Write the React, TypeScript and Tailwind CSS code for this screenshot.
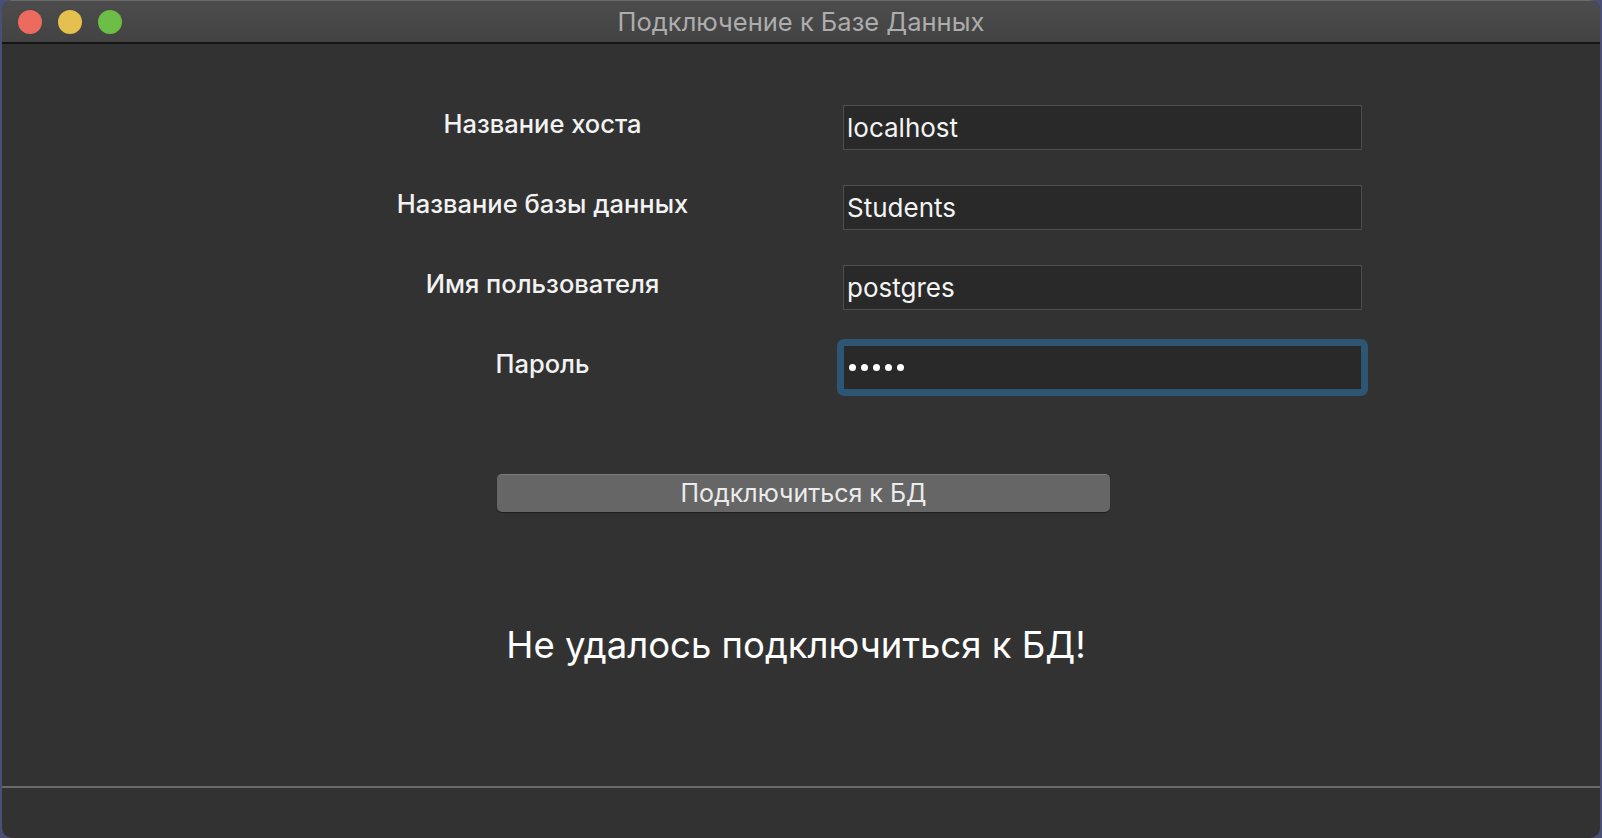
const fields = [
  { label: "Название хоста", value: "localhost" },
  { label: "Название базы данных", value: "Students" },
  { label: "Имя пользователя", value: "postgres" },
];

function TrafficLights() {
  return (
    <div className="flex items-center gap-[16px] pl-[16px]">
      <span className="h-[24px] w-[24px] rounded-full bg-[#ed6a5e]" />
      <span className="h-[24px] w-[24px] rounded-full bg-[#e5c04f]" />
      <span className="h-[24px] w-[24px] rounded-full bg-[#6cbe46]" />
    </div>
  );
}

function FieldRow({ label, children }: { label: string; children: React.ReactNode }) {
  return (
    <div className="flex items-center pl-[268px]">
      <div className="w-[545px] -translate-y-[3px] text-center text-[25.5px] font-medium text-[#f2f2f2]">{label}</div>
      <div className="ml-[28px]">{children}</div>
    </div>
  );
}

export default function App() {
  return (
    <div
      className="h-[838px] w-[1602px] overflow-hidden bg-[#4a4f78] px-[2px]"
      style={{ fontFamily: "Inter, 'Noto Sans', sans-serif" }}
    >
      <div className="flex h-[838px] flex-col overflow-hidden rounded-[10px] bg-[#323232]">
        <div className="relative flex h-[44px] shrink-0 items-center border-t border-[#6a6a6a] border-b-2 border-b-[#151515] bg-gradient-to-b from-[#4c4c4c] to-[#434343]">
          <TrafficLights />
          <div className="absolute inset-x-0 translate-y-[1px] text-center text-[25.5px] text-[#adadad]">Подключение к Базе Данных</div>
        </div>

        <div className="flex flex-1 flex-col pt-[61px]">
          <div className="flex flex-col gap-[35px]">
            {fields.map((f) => (
              <FieldRow key={f.label} label={f.label}>
                <div className="flex h-[45px] w-[519px] items-center border border-[#4e4e4e] bg-[#292929] pl-[3px] text-[26px] text-[#f4f4f4]">
                  {f.value}
                </div>
              </FieldRow>
            ))}
            <FieldRow label="Пароль">
              <div className="relative flex h-[45px] w-[519px] items-center gap-[5px] border border-[#4e4e4e] bg-[#292929] pl-[5px]">
                <div className="absolute -inset-[7px] rounded-[7px] border-[7px] border-[#2c5673]" />
                {[0, 1, 2, 3, 4].map((i) => (
                  <span key={i} className="h-[7px] w-[7px] rounded-full bg-white" />
                ))}
              </div>
            </FieldRow>
          </div>

          <button className="ml-[495px] mt-[84px] flex h-[38px] w-[613px] items-center justify-center rounded-[5px] border-t border-[#7a7a7a] bg-[#666666] text-[25px] text-[#ececec] shadow-[0_1px_1px_rgba(0,0,0,0.4)]">
            Подключиться к БД
          </button>

          <div className="mt-[106px] pr-[10px] text-center text-[36.5px] text-white">Не удалось подключиться к БД!</div>

          <div className="mt-auto h-[52px] border-t-2 border-[#6a6a6a]" />
        </div>
      </div>
    </div>
  );
}
